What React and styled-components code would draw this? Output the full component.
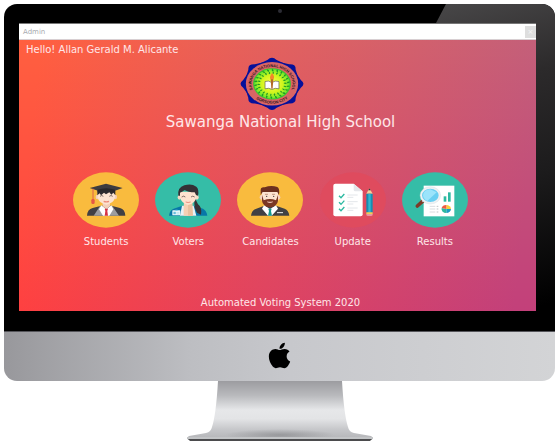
import React from 'react';
import styled, { createGlobalStyle } from 'styled-components';
import { FaApple } from 'react-icons/fa';

const GlobalStyle = createGlobalStyle`
  * { box-sizing: border-box; }
  body {
    margin: 0;
    background: #fff;
    font-family: "DejaVu Sans", Verdana, sans-serif;
  }
`;

const Page = styled.main`
  padding: 4px;
`;

const Monitor = styled.div`
  border-radius: 13px;
  overflow: hidden;
`;

const Bezel = styled.div`
  position: relative;
  padding: 19px 19px 20px 15px;
  background: #000;
`;

const Glare = styled.div`
  position: absolute;
  inset: 0 0 0 auto;
  width: 119px;
  background: linear-gradient(165deg, #484748 0%, #2c2a2b 26%, #1c1b1c 55%, #000 92%);
  clip-path: polygon(10px 0, 100% 0, 100% 100%, 80% 100%, 80% 19px, 0 19px);
`;

const Camera = styled.div`
  position: absolute;
  top: 5px;
  left: 50%;
  width: 4px;
  height: 4px;
  margin-left: -2px;
  border-radius: 50%;
  background: #2c2c34;
`;

const Screen = styled.div`
  position: relative;
  border-top: 1px solid #777;
`;

const TitleBar = styled.header`
  display: flex;
  align-items: center;
  justify-content: space-between;
  height: 16px;
  padding-left: 4px;
  background: #fff;
  border-bottom: 1px solid #d8cfd2;
  color: #a8acb0;
  font-size: 7px;
  line-height: 14px;
`;

const CloseButton = styled.button`
  width: 11px;
  height: 12px;
  padding: 0;
  border: 0;
  background: #dedede;
  color: #f6f6f6;
  font: inherit;
  line-height: 12px;
`;

const Desktop = styled.section`
  display: flex;
  flex-direction: column;
  align-items: center;
  padding: 2px 0 1px;
  color: #ffe6e8;
  background:
    linear-gradient(to bottom, rgb(0, 42, 0), #000),
    linear-gradient(96deg, #ff4040 4%, #e04260 50%, #c3407a 96%);
  background-blend-mode: screen;
`;

const Greeting = styled.p`
  align-self: flex-start;
  margin: 0;
  padding-left: 7px;
  font-size: 10px;
  line-height: 15px;
`;

const SealArt = styled.svg`
  display: block;
  width: 64px;
  height: 53px;
  margin-right: 12px;
`;

const SchoolName = styled.h1`
  margin: 0 0 38px;
  padding-left: 6px;
  font-size: 15px;
  font-weight: 400;
  line-height: 24px;
`;

const Menu = styled.nav`
  display: grid;
  grid-template-columns: repeat(5, minmax(0, 1fr));
  width: 100%;
  padding: 0 60px 0 46px;
`;

const MenuButton = styled.button`
  display: flex;
  flex-direction: column;
  align-items: center;
  gap: 7px;
  padding: 0;
  border: 0;
  background: none;
  color: inherit;
  font: inherit;
  font-size: 10px;
  line-height: 14px;
`;

const MenuArt = styled.svg`
  display: block;
  width: 66px;
  height: 56px;
`;

const Footer = styled.footer`
  margin-top: 47px;
  padding-left: 6px;
  font-size: 10px;
  line-height: 14px;
`;

const Chin = styled.div`
  display: flex;
  align-items: center;
  justify-content: center;
  height: 50px;
  padding-bottom: 2px;
  border-top: 1px solid #55555a;
  background: linear-gradient(to right, #98989c, #bdbec2 34%, #c7c8cc 52%, #d3d4d6);
  color: #000;
`;

const Stand = styled.svg`
  display: block;
  width: 188px;
  height: 60px;
  margin: 0 auto;
`;

const lobes = Array.from({ length: 8 }, (_, i) => i * 45);
const leaves = Array.from({ length: 22 }, (_, i) => (i * 360) / 22);

function Seal() {
  return (
    <SealArt viewBox="30 18 192 160" role="img" aria-label="School seal">
      <defs>
        <radialGradient id="glow">
          <stop offset="0" stopColor="#fffb50" />
          <stop offset="0.6" stopColor="#d2f51c" />
          <stop offset="1" stopColor="#6bea2c" />
        </radialGradient>
        <path id="topArc" d="M86 138 A62 51 0 1 1 166 138" />
        <path id="bottomArc" d="M66 132 A72 60 0 0 0 186 132" />
      </defs>
      <g transform="translate(126 99) scale(1 .83)">
        {lobes.map((a) => (
          <path key={a} transform={`rotate(${a})`} fill="#06109a" d="M0-95Q7-95 14-87L40-72 26 0H-26L-40-72-14-87Q-7-95 0-95Z" />
        ))}
        <circle r="79" fill="#d96565" />
        <circle r="57" fill="#3cc62f" />
        <circle r="53" fill="url(#glow)" />
        {leaves.map((a) => (
          <g key={a} transform={`rotate(${a})`} fill="#1f9a26">
            <path d="M0-55Q8-50 3-44-3-48 0-55Z" />
            <path d="M4-45Q9-40 3-35-1-39 4-45Z" />
          </g>
        ))}
      </g>
      <text fontFamily="Liberation Sans, sans-serif" fontSize="12" fontWeight="700" fill="#32171e">
        <textPath href="#topArc" startOffset="50%" textAnchor="middle">SAWANGA NATIONAL HIGH SCHOOL</textPath>
      </text>
      <text fontFamily="Liberation Sans, sans-serif" fontSize="12" fontWeight="700" fill="#32171e">
        <textPath href="#bottomArc" startOffset="50%" textAnchor="middle">SORSOGON CITY</textPath>
      </text>
      <path d="M105 92Q116 88 125 95 136 88 147 92V114Q135 110 126 116 116 110 105 114Z" fill="#fff" stroke="#5b5b4d" strokeWidth="2" />
      <path d="M122 84H130L128 114H124Z" fill="#b36a24" />
      <path d="M126 66Q136 77 130 85H122Q116 80 126 66Z" fill="#f2872b" />
    </SealArt>
  );
}

function StudentArt() {
  return (
    <MenuArt viewBox="24 22 198 168" aria-hidden="true">
      <ellipse cx="123" cy="106" rx="99" ry="83" fill="#f9bb3e" />
      <path d="M66 153Q67 134 83 130L109 123H139L165 130Q180 134 181 153Z" fill="#414044" />
      <path d="M105 124L124 136 142 124 162 153H86Z" fill="#9c9da0" />
      <path d="M109 122L124 134 139 122 145 134 133 153H114L102 134Z" fill="#fff" />
      <path d="M113 110H135V125L124 134 113 125Z" fill="#f3cfb9" />
      <path d="M119 132H129L127 139 129 153H119L121 139Z" fill="#d63444" />
      <ellipse cx="97" cy="97" rx="5" ry="7" fill="#f3cfb9" />
      <ellipse cx="151" cy="97" rx="5" ry="7" fill="#f3cfb9" />
      <path d="M98 78H150V98Q147 116 124 120 101 116 98 98Z" fill="#fce3d1" />
      <path d="M97 92V72H151V92L145 84 139 90 133 83 123 89 117 84 108 92 104 86Z" fill="#2c2a2e" />
      <path d="M74 70L123 57 173 70 150 78Q124 70 99 78Z" fill="#3d3c40" />
      <path d="M98 75Q124 66 150 75V83Q124 75 98 83Z" fill="#29282b" />
      <path d="M84 72V105" stroke="#dd6248" strokeWidth="3" />
      <rect x="79" y="103" width="10" height="15" rx="4" fill="#e75745" />
      <path d="M105 95Q110 90 115 95M133 95Q138 90 143 95" fill="none" stroke="#3b3030" strokeWidth="2" />
      <path d="M116 110Q124 113 132 110" fill="none" stroke="#ed8e7c" strokeWidth="4" />
    </MenuArt>
  );
}

function VoterArt() {
  return (
    <MenuArt viewBox="275 22 198 168" aria-hidden="true">
      <ellipse cx="374" cy="106" rx="99" ry="83" fill="#35bda7" />
      <path d="M317 153Q319 137 331 132L357 123H391L419 132Q430 138 432 153Z" fill="#0877a7" />
      <path d="M356 123L391 123 399 153H350Z" fill="#e9f1f4" />
      <path d="M362 110H387V126L389 153H361V126Z" fill="#f5d0b4" />
      <path d="M374 112H387V126L389 153H374Z" fill="#eac09f" />
      <path d="M393 96L404 119Q417 128 413 150L401 144Q392 131 393 117Z" fill="#363337" />
      <ellipse cx="348" cy="98" rx="5" ry="7" fill="#f7d9c2" />
      <ellipse cx="401" cy="98" rx="5" ry="7" fill="#f7d9c2" />
      <path d="M350 81H399V99Q395 116 374 121 354 116 350 98Z" fill="#fde2cf" />
      <path d="M345 93Q342 68 363 62 384 55 399 66 408 74 404 93L398 91 394 83Q375 83 364 76 355 83 350 84L350 93Z" fill="#343135" />
      <path d="M355 97Q361 92 366 97M383 97Q388 92 394 97" fill="none" stroke="#453535" strokeWidth="2" />
      <path d="M367 112Q374 115 382 112" fill="none" stroke="#ed8e7c" strokeWidth="3" />
      <rect x="327" y="137" width="24" height="15" rx="2" fill="#e9f7fa" />
      <path d="M336 135H343V139H336Z" fill="#7acfe7" />
      <path d="M331 142H337V148H331ZM340 144H348M340 148H348" fill="#67bedb" stroke="#67bedb" strokeWidth="1" />
    </MenuArt>
  );
}

function CandidateArt() {
  return (
    <MenuArt viewBox="26 22 198 168" aria-hidden="true">
      <ellipse cx="125" cy="106" rx="99" ry="83" fill="#f9bb3e" />
      <path d="M68 153Q70 136 84 132L108 123H143L169 132Q181 137 183 153Z" fill="#414044" />
      <path d="M107 122L125 133 143 122 149 132 130 153H119L101 132Z" fill="#fff" />
      <path d="M120 132H130L128 139 131 153H119L122 139Z" fill="#16988b" />
      <ellipse cx="99" cy="98" rx="5" ry="7" fill="#f3cfb9" />
      <ellipse cx="151" cy="98" rx="5" ry="7" fill="#f3cfb9" />
      <path d="M100 78H150V108H100Z" fill="#fce3d1" />
      <path d="M97 91V76Q97 66 109 68 128 61 147 67 155 72 152 91L147 82H103Z" fill="#6c301f" />
      <path d="M101 91L106 107Q125 99 143 107L149 91V108Q147 125 125 128 103 125 101 108Z" fill="#7b3824" />
      <path d="M117 110Q125 113 133 110V113Q125 117 117 113Z" fill="#f0c9ba" />
      <path d="M110 89H119M131 89H140" stroke="#a8735c" strokeWidth="2" />
      <circle cx="115" cy="95" r="2" fill="#343033" />
      <circle cx="136" cy="95" r="2" fill="#343033" />
      <path d="M146 144H164" stroke="#f0f0f0" strokeWidth="3" />
    </MenuArt>
  );
}

function UpdateArt() {
  return (
    <MenuArt viewBox="266 22 198 168" aria-hidden="true">
      <ellipse cx="365" cy="106" rx="99" ry="83" fill="#df4b5e" />
      <path d="M312 57H367L394 80V149Q394 155 388 155H312Q306 155 306 149V63Q306 57 312 57Z" fill="#fff" />
      <path d="M367 57L394 80H372Q367 80 367 75Z" fill="#e4e6ea" />
      <path d="M323 93L329 99 339 88M323 113L329 119 339 108M323 132L329 138 339 127" fill="none" stroke="#2cb9a1" strokeWidth="4" />
      <path d="M348 91H379M348 98H366M348 111H379M348 118H366M348 130H379M348 137H366" stroke="#e3e6ea" strokeWidth="3" />
      <path d="M405 87L414 71 424 87Z" fill="#f7d09b" />
      <path d="M411 77L414 71 418 77Z" fill="#333" />
      <path d="M405 87H424V144H405Z" fill="#168eb2" />
      <path d="M411 87H418V144H411Z" fill="#35b6d0" />
      <path d="M405 143H424V148H405Z" fill="#f2ce54" />
      <path d="M405 148H424V151Q423 154 419 154H410Q406 154 405 151Z" fill="#e998a0" />
    </MenuArt>
  );
}

function ResultArt() {
  return (
    <MenuArt viewBox="184 22 198 168" aria-hidden="true">
      <ellipse cx="283" cy="106" rx="99" ry="83" fill="#35bda7" />
      <rect x="249" y="63" width="92" height="92" fill="#fff" />
      <rect x="309" y="95" width="8" height="16" fill="#2cb9a1" />
      <rect x="322" y="83" width="8" height="28" fill="#2cb9a1" />
      <path d="M267 125H284M267 133H284M267 142H284" stroke="#dadde0" strokeWidth="3" />
      <path d="M288 125H293M288 133H293M288 142H293" stroke="#bfc3c6" strokeWidth="3" />
      <path d="M317 133V121A14 12 0 0 1 331 133Z" fill="#f6cf38" />
      <path d="M317 133H331A14 12 0 0 1 317 145Z" fill="#1c9ac4" />
      <path d="M317 133V145A14 12 0 0 1 303 130Z" fill="#2cb9a1" />
      <path d="M317 133L303 130A14 12 0 0 1 317 121Z" fill="#ef5b45" />
      <path d="M230 124L248 108" stroke="#7c3b28" strokeWidth="11" strokeLinecap="round" />
      <path d="M245 111L254 103" stroke="#c6d1d4" strokeWidth="5" />
      <ellipse cx="269" cy="92" rx="28" ry="23" fill="#69cff2" stroke="#eff1f3" strokeWidth="6" />
      <ellipse cx="269" cy="92" rx="31" ry="26" fill="none" stroke="#c8d5dc" strokeWidth="1" />
      <path d="M247 91Q250 75 269 74L288 83 260 109Q248 103 247 91Z" fill="#9be4fb" />
    </MenuArt>
  );
}

const menuItems = [
  { label: 'Students', Art: StudentArt },
  { label: 'Voters', Art: VoterArt },
  { label: 'Candidates', Art: CandidateArt },
  { label: 'Update', Art: UpdateArt },
  { label: 'Results', Art: ResultArt },
];

export default function App() {
  return (
    <>
      <GlobalStyle />
      <Page>
        <Monitor>
          <Bezel>
            <Glare />
            <Camera />
            <Screen>
              <TitleBar>
                <span>Admin</span>
                <CloseButton type="button" aria-label="Close">×</CloseButton>
              </TitleBar>
              <Desktop>
                <Greeting>Hello! Allan Gerald M. Alicante</Greeting>
                <Seal />
                <SchoolName>Sawanga National High School</SchoolName>
                <Menu aria-label="Administration">
                  {menuItems.map(({ label, Art }) => (
                    <MenuButton key={label} type="button">
                      <Art />
                      {label}
                    </MenuButton>
                  ))}
                </Menu>
                <Footer>Automated Voting System 2020</Footer>
              </Desktop>
            </Screen>
          </Bezel>
          <Chin>
            <FaApple size={29} aria-label="Apple" />
          </Chin>
        </Monitor>
        <Stand viewBox="0 0 188 60" aria-hidden="true">
          <defs>
            <linearGradient id="metal" x1="0" y1="0" x2="0" y2="1">
              <stop offset="0" stopColor="#9c9ca0" />
              <stop offset="0.25" stopColor="#b9babd" />
              <stop offset="0.5" stopColor="#e6e7e9" />
              <stop offset="0.65" stopColor="#e3e4e6" />
              <stop offset="0.85" stopColor="#c4c5c8" />
              <stop offset="1" stopColor="#b4b5b8" />
            </linearGradient>
            <radialGradient id="shade">
              <stop offset="0" stopColor="#88898c" stopOpacity="0.7" />
              <stop offset="1" stopColor="#88898c" stopOpacity="0" />
            </radialGradient>
          </defs>
          <path d="M32 0H156Q158 34 162 46 163 51 168 52L185 55Q187 56 187 58H1Q1 56 3 55L20 52Q25 51 26 46 30 34 32 0Z" fill="url(#metal)" />
          <ellipse cx="94" cy="54" rx="55" ry="6" fill="url(#shade)" />
          <path d="M1 56H187L186 59H2Z" fill="#c2c4c6" />
          <path d="M2 58H186L184 60H4Z" fill="#4b4b4d" />
        </Stand>
      </Page>
    </>
  );
}
